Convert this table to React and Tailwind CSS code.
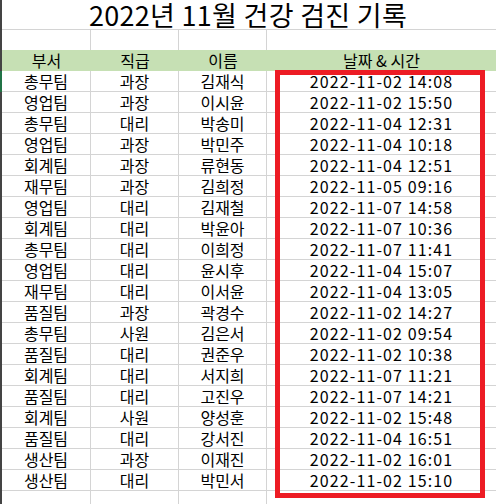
const rows = [
  ['총무팀', '과장', '김재식', '2022-11-02 14:08'],
  ['영업팀', '과장', '이시윤', '2022-11-02 15:50'],
  ['총무팀', '대리', '박송미', '2022-11-04 12:31'],
  ['영업팀', '과장', '박민주', '2022-11-04 10:18'],
  ['회계팀', '과장', '류현동', '2022-11-04 12:51'],
  ['재무팀', '과장', '김희정', '2022-11-05 09:16'],
  ['영업팀', '대리', '김재철', '2022-11-07 14:58'],
  ['회계팀', '대리', '박윤아', '2022-11-07 10:36'],
  ['총무팀', '대리', '이희정', '2022-11-07 11:41'],
  ['영업팀', '대리', '윤시후', '2022-11-04 15:07'],
  ['재무팀', '대리', '이서윤', '2022-11-04 13:05'],
  ['품질팀', '과장', '곽경수', '2022-11-02 14:27'],
  ['총무팀', '사원', '김은서', '2022-11-02 09:54'],
  ['품질팀', '대리', '권준우', '2022-11-02 10:38'],
  ['회계팀', '대리', '서지희', '2022-11-07 11:21'],
  ['품질팀', '대리', '고진우', '2022-11-07 14:21'],
  ['회계팀', '사원', '양성훈', '2022-11-02 15:48'],
  ['품질팀', '대리', '강서진', '2022-11-04 16:51'],
  ['생산팀', '과장', '이재진', '2022-11-02 16:01'],
  ['생산팀', '대리', '박민서', '2022-11-02 15:10'],
];

const cols = 'grid grid-cols-[89px_88px_88px_1fr]';
const cell = 'flex items-center justify-center border-r border-[#d4d4d4]';

export default function App() {
  return (
    <div
      className="relative w-[496px] h-[504px] overflow-hidden bg-white flex text-black text-[16px]"
      style={{ fontFamily: '"Malgun Gothic", "Noto Sans CJK KR", sans-serif' }}
    >
      <div className="w-[2px] shrink-0 flex flex-col bg-[#444]">
        <div className="h-[71px]" />
        <div className="h-[21px] bg-[#217346]" />
      </div>
      <div className="flex-1 flex flex-col">
        <div className="h-[30px] border-b border-[#d4d4d4] flex items-center justify-center pr-[2px]">
          <span className="text-[27px] leading-[28px] tracking-[0.3px]">2022년 11월 건강 검진 기록</span>
        </div>
        <div className={`${cols} h-[20px]`}>
          <div className={cell} />
          <div className={cell} />
          <div className={cell} />
          <div />
        </div>
        <div className={`${cols} h-[21px] bg-[#c6e0b4] leading-[19px]`}>
          <div className="flex items-center justify-center">부서</div>
          <div className="flex items-center justify-center">직급</div>
          <div className="flex items-center justify-center">이름</div>
          <div className="flex items-center justify-center">날짜 &amp; 시간</div>
        </div>
        {rows.map((r, i) => (
          <div key={i} className={`${cols} h-[21px] border-b border-[#d4d4d4] leading-[19px]`}>
            <div className={cell}>{r[0]}</div>
            <div className={cell}>{r[1]}</div>
            <div className={cell}>{r[2]}</div>
            <div className="flex items-center justify-center tracking-[1.1px]">{r[3]}</div>
          </div>
        ))}
        <div className={`${cols} flex-1`}>
          <div className={cell} />
          <div className={cell} />
          <div className={cell} />
          <div />
        </div>
      </div>
      <div className="absolute left-[275px] top-[70px] w-[210px] h-[428px] border-[5px] border-[#ed1c24]" />
    </div>
  );
}
